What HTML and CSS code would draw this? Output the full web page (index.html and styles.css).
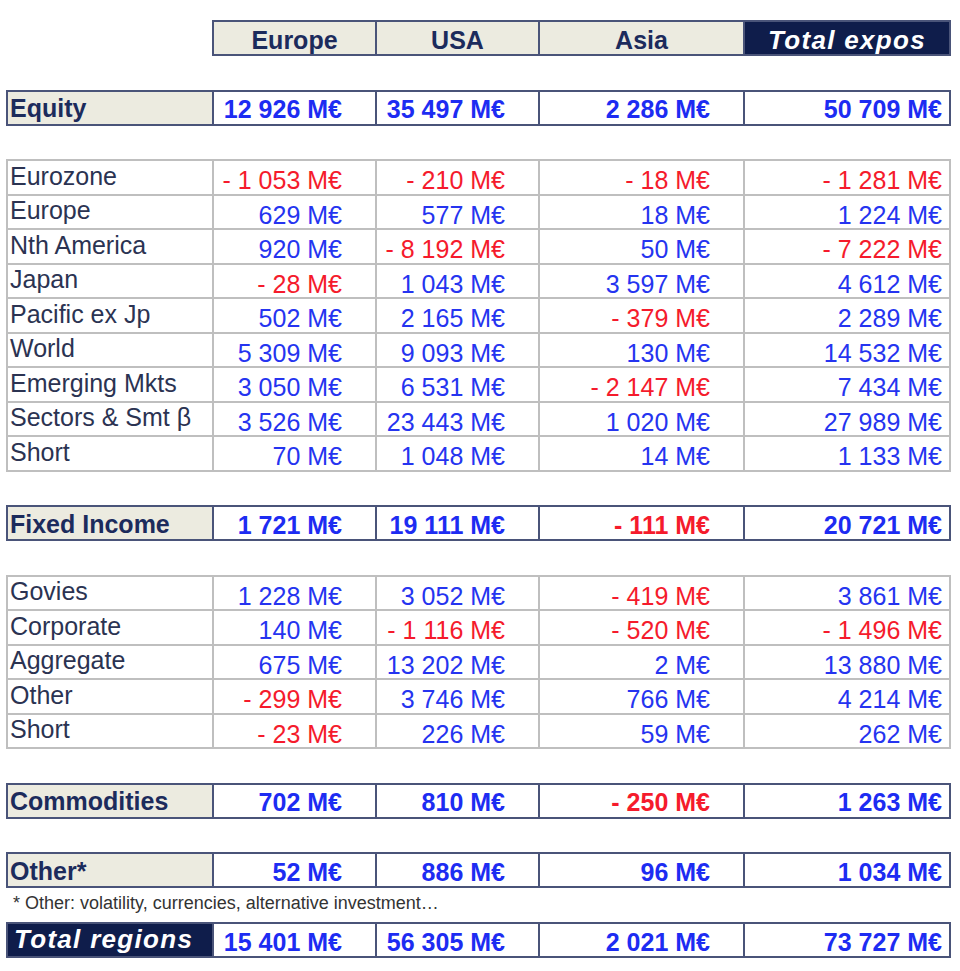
FILE: index.html
```html
<!DOCTYPE html>
<html>
<head>
<meta charset="utf-8">
<title>Exposures</title>
<link rel="stylesheet" href="styles.css">
</head>
<body>
<div class="sheet">
  <div class="block grp hdr">
    <div class="cell head">Europe</div>
    <div class="cell head">USA</div>
    <div class="cell head">Asia</div>
    <div class="cell head dark">Total expos</div>
  </div>

  <div class="block grp">
    <div class="cell glbl">Equity</div>
    <div class="cell gnum">12 926 M€</div>
    <div class="cell gnum">35 497 M€</div>
    <div class="cell gnum">2 286 M€</div>
    <div class="cell gnum tot">50 709 M€</div>
  </div>

  <div class="block det">
    <div class="cell lbl">Eurozone</div><div class="cell num neg">- 1 053 M€</div><div class="cell num neg">- 210 M€</div><div class="cell num neg">- 18 M€</div><div class="cell num neg tot">- 1 281 M€</div>
    <div class="cell lbl">Europe</div><div class="cell num">629 M€</div><div class="cell num">577 M€</div><div class="cell num">18 M€</div><div class="cell num tot">1 224 M€</div>
    <div class="cell lbl">Nth America</div><div class="cell num">920 M€</div><div class="cell num neg">- 8 192 M€</div><div class="cell num">50 M€</div><div class="cell num neg tot">- 7 222 M€</div>
    <div class="cell lbl">Japan</div><div class="cell num neg">- 28 M€</div><div class="cell num">1 043 M€</div><div class="cell num">3 597 M€</div><div class="cell num tot">4 612 M€</div>
    <div class="cell lbl">Pacific ex Jp</div><div class="cell num">502 M€</div><div class="cell num">2 165 M€</div><div class="cell num neg">- 379 M€</div><div class="cell num tot">2 289 M€</div>
    <div class="cell lbl">World</div><div class="cell num">5 309 M€</div><div class="cell num">9 093 M€</div><div class="cell num">130 M€</div><div class="cell num tot">14 532 M€</div>
    <div class="cell lbl">Emerging Mkts</div><div class="cell num">3 050 M€</div><div class="cell num">6 531 M€</div><div class="cell num neg">- 2 147 M€</div><div class="cell num tot">7 434 M€</div>
    <div class="cell lbl">Sectors &amp; Smt β</div><div class="cell num">3 526 M€</div><div class="cell num">23 443 M€</div><div class="cell num">1 020 M€</div><div class="cell num tot">27 989 M€</div>
    <div class="cell lbl">Short</div><div class="cell num">70 M€</div><div class="cell num">1 048 M€</div><div class="cell num">14 M€</div><div class="cell num tot">1 133 M€</div>
  </div>

  <div class="block grp">
    <div class="cell glbl">Fixed Income</div>
    <div class="cell gnum">1 721 M€</div>
    <div class="cell gnum">19 111 M€</div>
    <div class="cell gnum neg">- 111 M€</div>
    <div class="cell gnum tot">20 721 M€</div>
  </div>

  <div class="block det">
    <div class="cell lbl">Govies</div><div class="cell num">1 228 M€</div><div class="cell num">3 052 M€</div><div class="cell num neg">- 419 M€</div><div class="cell num tot">3 861 M€</div>
    <div class="cell lbl">Corporate</div><div class="cell num">140 M€</div><div class="cell num neg">- 1 116 M€</div><div class="cell num neg">- 520 M€</div><div class="cell num neg tot">- 1 496 M€</div>
    <div class="cell lbl">Aggregate</div><div class="cell num">675 M€</div><div class="cell num">13 202 M€</div><div class="cell num">2 M€</div><div class="cell num tot">13 880 M€</div>
    <div class="cell lbl">Other</div><div class="cell num neg">- 299 M€</div><div class="cell num">3 746 M€</div><div class="cell num">766 M€</div><div class="cell num tot">4 214 M€</div>
    <div class="cell lbl">Short</div><div class="cell num neg">- 23 M€</div><div class="cell num">226 M€</div><div class="cell num">59 M€</div><div class="cell num tot">262 M€</div>
  </div>

  <div class="block grp">
    <div class="cell glbl">Commodities</div>
    <div class="cell gnum">702 M€</div>
    <div class="cell gnum">810 M€</div>
    <div class="cell gnum neg">- 250 M€</div>
    <div class="cell gnum tot">1 263 M€</div>
  </div>

  <div class="tail">
    <div class="block grp">
      <div class="cell glbl">Other*</div>
      <div class="cell gnum">52 M€</div>
      <div class="cell gnum">886 M€</div>
      <div class="cell gnum">96 M€</div>
      <div class="cell gnum tot">1 034 M€</div>
    </div>
    <div class="note">* Other: volatility, currencies, alternative investment…</div>
    <div class="block grp">
      <div class="cell glbl total">Total regions</div>
      <div class="cell gnum">15 401 M€</div>
      <div class="cell gnum">56 305 M€</div>
      <div class="cell gnum">2 021 M€</div>
      <div class="cell gnum tot">73 727 M€</div>
    </div>
  </div>
</div>
</body>
</html>
```

FILE: styles.css
```css
body {
  margin: 0;
  background: #ffffff;
  font-family: "Liberation Sans", Arial, sans-serif;
}

.sheet {
  display: flex;
  flex-direction: column;
  align-items: flex-start;
  gap: 33.5px;
  padding: 20px 0 0 6px;
}

.block {
  display: grid;
  grid-template-columns: 204px 161px 161px 203px 204px;
  gap: 2px;
  padding: 2px;
}

.grp {
  background: #4a5479;
  grid-auto-rows: 32px;
}

.hdr {
  grid-template-columns: 161px 161px 203px 204px;
  margin-left: 206px;
}

.det {
  background: #bfbfbf;
  grid-auto-rows: 32.5px;
}

.cell {
  box-sizing: border-box;
  background: #ffffff;
  font-size: 25px;
  line-height: 28px;
  white-space: nowrap;
  overflow: hidden;
}

.head {
  background: #ecebe0;
  color: #1c2b5c;
  font-weight: bold;
  text-align: center;
  padding-top: 4.3px;
}

.head.dark {
  background: #0f1d4b;
  color: #ffffff;
  font-style: italic;
  font-size: 26px;
  letter-spacing: 1.3px;
}

.glbl {
  background: #ecebe0;
  color: #1c2b5c;
  font-weight: bold;
  padding: 2.6px 0 0 2px;
}

.glbl.total {
  background: #0f1d4b;
  color: #ffffff;
  font-style: italic;
  font-size: 26px;
  letter-spacing: 1.3px;
  padding: 0.5px 0 0 6px;
}

.gnum {
  color: #1d2cf2;
  font-weight: bold;
  text-align: right;
  padding: 3.9px 33px 0 0;
}

.lbl {
  color: #2b3352;
  padding: 0.8px 0 0 2px;
}

.num {
  color: #2534f0;
  text-align: right;
  padding: 5px 33px 0 0;
}

.neg {
  color: #f51b2c;
}

.tot {
  padding-right: 7px;
}

.tail {
  display: flex;
  flex-direction: column;
  align-items: flex-start;
}

.note {
  height: 34px;
  box-sizing: border-box;
  padding-left: 7px;
  font-size: 18px;
  line-height: 30px;
  color: #333333;
}
```
